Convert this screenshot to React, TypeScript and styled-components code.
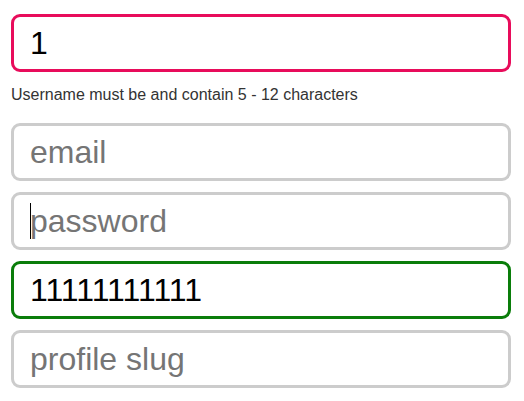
import React from "react";
import styled, { createGlobalStyle } from "styled-components";

const GlobalStyle = createGlobalStyle`
  html, body {
    margin: 0;
    padding: 0;
    background: #ffffff;
    font-family: "Liberation Sans", Arial, sans-serif;
  }
`;

const Form = styled.form`
  display: flex;
  flex-direction: column;
  gap: 11px;
  width: 500px;
  padding: 14px 11px;
`;

type Status = "error" | "valid" | "neutral";

const borderColor: Record<Status, string> = {
  error: "#e80c5b",
  valid: "#0a7d0a",
  neutral: "#cccccc",
};

const FieldWrap = styled.div<{ $caret?: boolean }>`
  position: relative;
  width: 100%;

  ${(p) =>
    p.$caret &&
    `
    &::after {
      content: "";
      position: absolute;
      left: 19px;
      top: 11px;
      width: 1px;
      height: 36px;
      background: #000000;
      pointer-events: none;
    }
  `}
`;

const Field = styled.input<{ $status: Status }>`
  display: block;
  box-sizing: border-box;
  width: 100%;
  height: 58px;
  margin: 0;
  padding: 0 16px;
  border: 3px solid ${(p) => borderColor[p.$status]};
  border-radius: 9px;
  font-family: "Liberation Sans", Arial, sans-serif;
  font-size: 32px;
  color: #000000;
  background: #ffffff;
  outline: none;
  caret-color: transparent;

  &::placeholder {
    color: #757575;
    opacity: 1;
  }
`;

const Helper = styled.p`
  margin: 3px 0 8px;
  font-family: "Liberation Sans", Arial, sans-serif;
  font-size: 16px;
  line-height: 18px;
  color: #333333;
`;

export default function App() {
  return (
    <>
      <GlobalStyle />
      <Form onSubmit={(e) => e.preventDefault()}>
        <FieldWrap>
          <Field $status="error" type="text" defaultValue="1" placeholder="username" />
        </FieldWrap>
        <Helper>Username must be and contain 5 - 12 characters</Helper>
        <FieldWrap>
          <Field $status="neutral" type="text" placeholder="email" />
        </FieldWrap>
        <FieldWrap $caret>
          <Field $status="neutral" type="password" placeholder="password" />
        </FieldWrap>
        <FieldWrap>
          <Field $status="valid" type="text" defaultValue="11111111111" placeholder="phone" />
        </FieldWrap>
        <FieldWrap>
          <Field $status="neutral" type="text" placeholder="profile slug" />
        </FieldWrap>
      </Form>
    </>
  );
}
